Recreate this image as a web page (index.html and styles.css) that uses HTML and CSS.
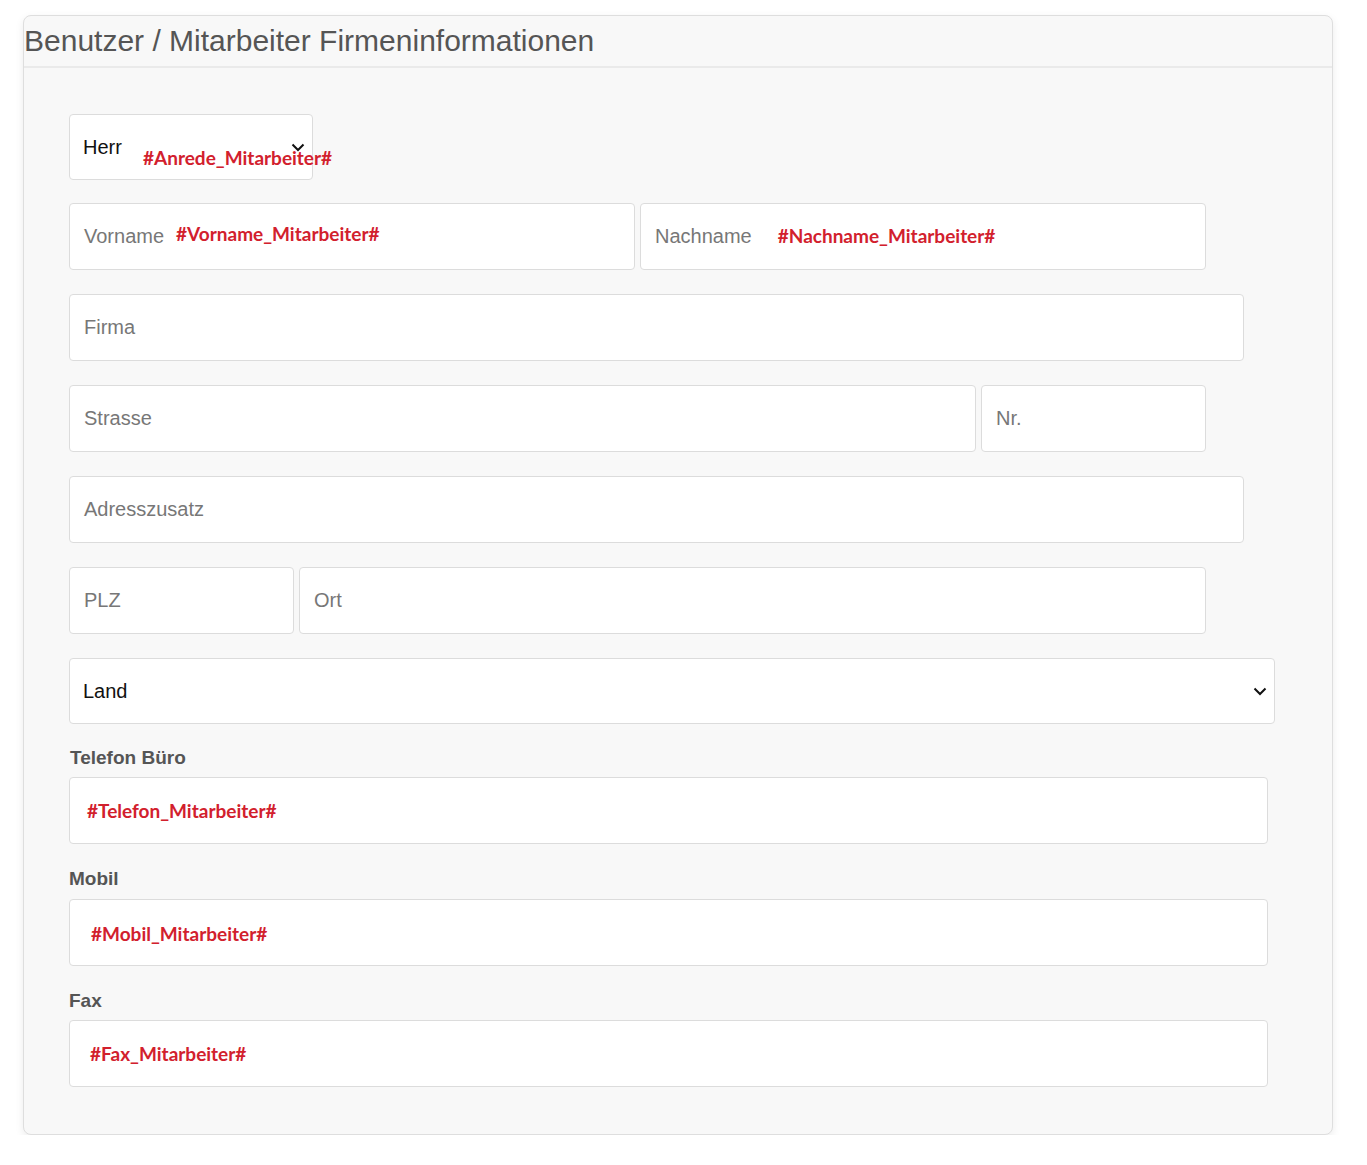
FILE: index.html
```html
<!DOCTYPE html>
<html lang="de">
<head>
  <meta charset="UTF-8">
  <title>Benutzer / Mitarbeiter Firmeninformationen</title>
  <link rel="stylesheet" href="styles.css">
</head>
<body>
  <div class="card">
    <div class="card-header">
      <h2>Benutzer / Mitarbeiter Firmeninformationen</h2>
    </div>

    <div class="card-body">
      <div class="anrede">
        <div class="field select w-anrede">
          <span class="value">Herr</span>
          <svg class="chevron" width="14" height="9" viewBox="0 0 14 9"><path d="M1.5 1.5 L7 7 L12.5 1.5" fill="none" stroke="#111" stroke-width="2"/></svg>
        </div>
        <span class="token token-anrede">#Anrede_Mitarbeiter#</span>
      </div>

      <div class="row first-row">
        <div class="field w-half">
          <span class="placeholder">Vorname</span>
          <span class="token token-vorname">#Vorname_Mitarbeiter#</span>
        </div>
        <div class="field w-half">
          <span class="placeholder">Nachname</span>
          <span class="token token-nachname">#Nachname_Mitarbeiter#</span>
        </div>
      </div>

      <div class="row">
        <div class="field w-full"><span class="placeholder">Firma</span></div>
      </div>

      <div class="row">
        <div class="field w-wide"><span class="placeholder">Strasse</span></div>
        <div class="field w-small"><span class="placeholder">Nr.</span></div>
      </div>

      <div class="row">
        <div class="field w-full"><span class="placeholder">Adresszusatz</span></div>
      </div>

      <div class="row">
        <div class="field w-small"><span class="placeholder">PLZ</span></div>
        <div class="field w-wide"><span class="placeholder">Ort</span></div>
      </div>

      <div class="row">
        <div class="field select w-land">
          <span class="value">Land</span>
          <svg class="chevron" width="14" height="9" viewBox="0 0 14 9"><path d="M1.5 1.5 L7 7 L12.5 1.5" fill="none" stroke="#111" stroke-width="2"/></svg>
        </div>
      </div>

      <div class="group telefon">
        <label class="label">Telefon Büro</label>
        <div class="field w-phone">
          <span class="token token-telefon">#Telefon_Mitarbeiter#</span>
        </div>
      </div>

      <div class="group mobil">
        <label class="label">Mobil</label>
        <div class="field w-phone">
          <span class="token token-mobil">#Mobil_Mitarbeiter#</span>
        </div>
      </div>

      <div class="group">
        <label class="label">Fax</label>
        <div class="field w-phone">
          <span class="token token-fax">#Fax_Mitarbeiter#</span>
        </div>
      </div>
    </div>
  </div>
</body>
</html>
```

FILE: styles.css
```css
body {
  margin: 0;
  padding: 15px 0 0 23px;
  background-color: #fff;
  font-family: 'Liberation Sans', Arial, sans-serif;
}

.card {
  width: 1310px;
  box-sizing: border-box;
  background-color: #f8f8f8;
  border: 1px solid #dedede;
  border-radius: 8px;
  box-shadow: 0 3px 8px rgba(0, 0, 0, 0.08);
}

.card-header {
  height: 50px;
  border-bottom: 2px solid #eaeaea;
}

.card-header h2 {
  margin: 0;
  padding-top: 7px;
  font-size: 30px;
  font-weight: normal;
  color: #555;
  line-height: 36px;
}

.card-body {
  padding: 46px 0 47px 45px;
}

.row {
  display: flex;
  gap: 5px;
  margin-top: 24px;
}

.row.first-row {
  margin-top: 23px;
}

.field {
  display: flex;
  align-items: center;
  box-sizing: border-box;
  height: 67px;
  padding-left: 14px;
  background-color: #fff;
  border: 1px solid #dcdcdc;
  border-radius: 4px;
}

.placeholder {
  font-size: 20px;
  color: #777;
}

.value {
  font-size: 20px;
  color: #111;
}

.select {
  position: relative;
  padding-left: 13px;
}

.chevron {
  position: absolute;
  right: 7px;
  top: 28px;
}

.w-anrede { width: 244px; height: 66px; }
.w-half   { width: 566px; }
.w-full   { width: 1175px; }
.w-wide   { width: 907px; }
.w-small  { width: 225px; }
.w-land   { width: 1206px; height: 66px; }
.w-phone  { width: 1199px; }

.anrede {
  position: relative;
}

.token {
  font-family: Lato, 'Open Sans', sans-serif;
  font-weight: bold;
  font-size: 19px;
  color: #d2202d;
}

.token-anrede {
  position: absolute;
  left: 74px;
  top: 32px;
}

.token-vorname {
  margin-left: 12px;
  margin-top: -6px;
}

.token-nachname {
  margin-left: 26px;
  margin-top: -3px;
}

.token-telefon { margin-left: 3px; }
.token-mobil   { margin-left: 7px; margin-top: 1px; }
.token-fax     { margin-left: 6px; }

.group {
  margin-top: 24px;
}

.group.telefon {
  margin-top: 23px;
}

.label {
  display: block;
  margin-bottom: 8px;
  font-size: 19px;
  font-weight: bold;
  line-height: 22px;
  color: #555;
}

.telefon .label {
  padding-left: 1px;
}

.mobil .label {
  margin-bottom: 9px;
}
```
